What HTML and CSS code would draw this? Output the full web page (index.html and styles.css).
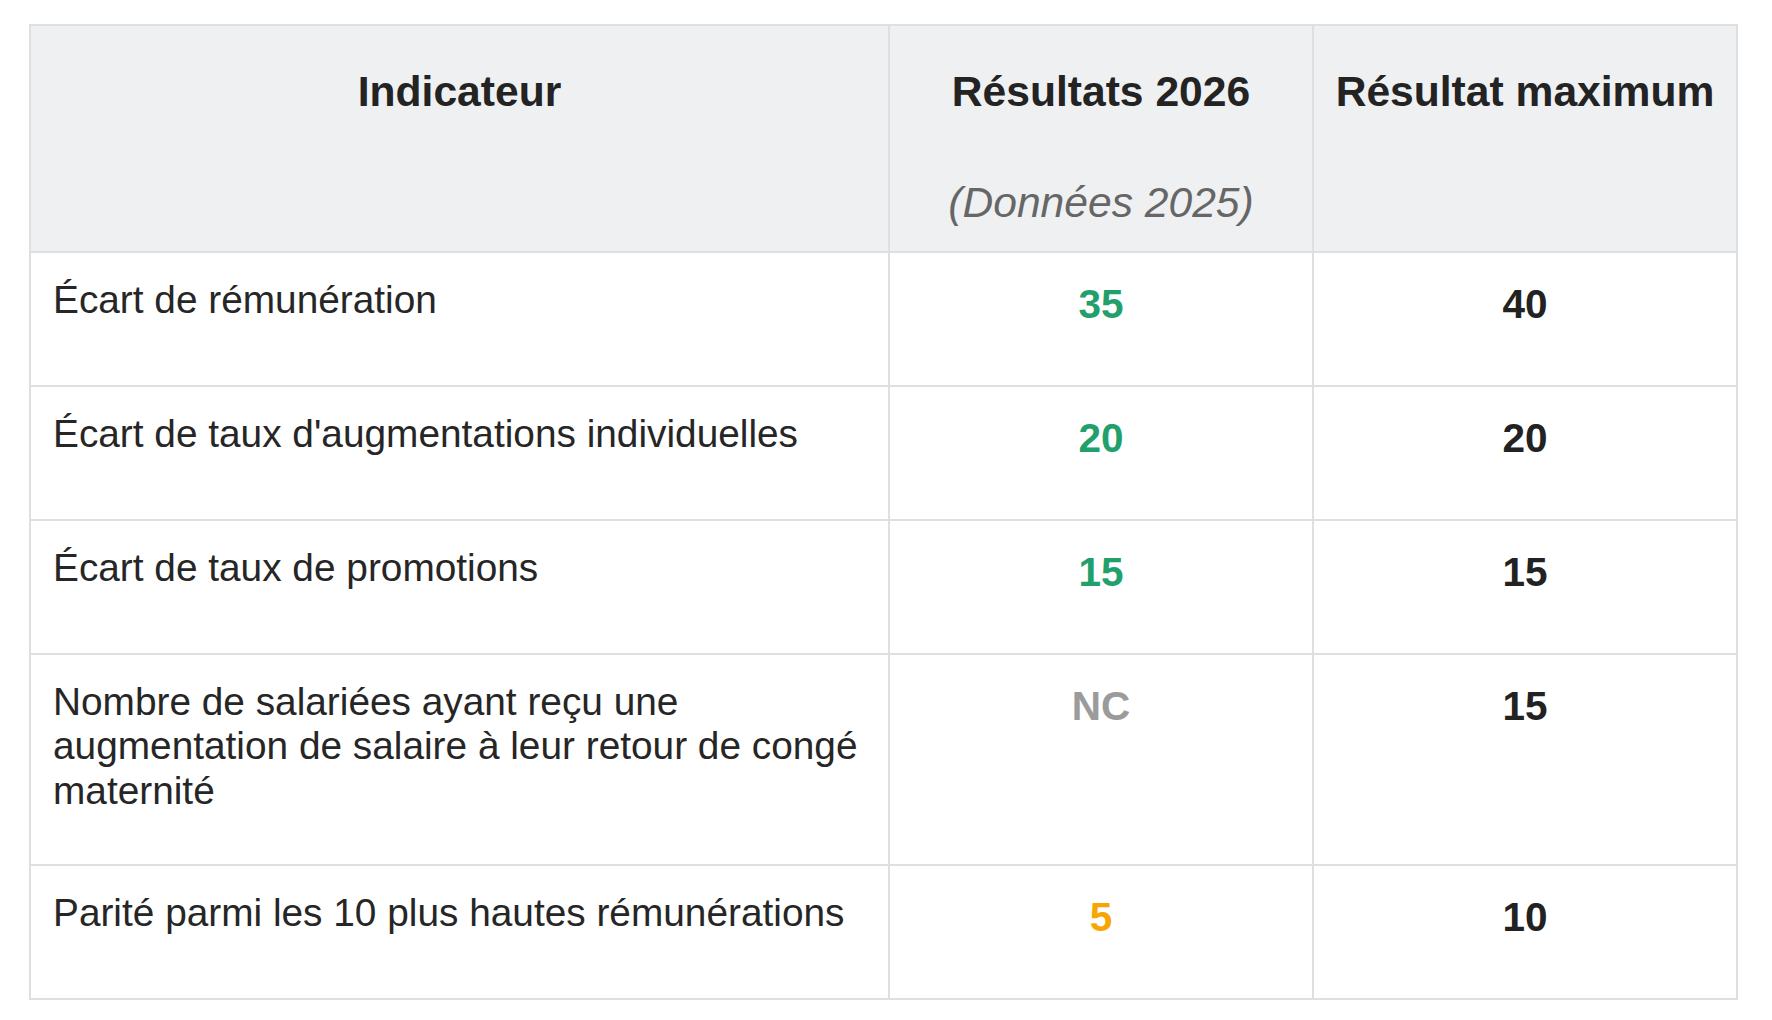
FILE: index.html
```html
<!DOCTYPE html>
<html lang="fr">
<head>
<meta charset="utf-8">
<title>Index égalité</title>
<link rel="stylesheet" href="styles.css">
</head>
<body>
<div class="page">
  <table class="scores">
    <colgroup>
      <col class="col-ind">
      <col class="col-res">
      <col class="col-max">
    </colgroup>
    <thead>
      <tr>
        <th>Indicateur</th>
        <th>Résultats 2026<br><br><em class="sub">(Données 2025)</em></th>
        <th>Résultat maximum</th>
      </tr>
    </thead>
    <tbody>
      <tr>
        <td class="label">Écart de rémunération</td>
        <td class="num good">35</td>
        <td class="num">40</td>
      </tr>
      <tr>
        <td class="label">Écart de taux d'augmentations individuelles</td>
        <td class="num good">20</td>
        <td class="num">20</td>
      </tr>
      <tr>
        <td class="label">Écart de taux de promotions</td>
        <td class="num good">15</td>
        <td class="num">15</td>
      </tr>
      <tr>
        <td class="label">Nombre de salariées ayant reçu une augmentation de salaire à leur retour de congé maternité</td>
        <td class="num na">NC</td>
        <td class="num">15</td>
      </tr>
      <tr>
        <td class="label">Parité parmi les 10 plus hautes rémunérations</td>
        <td class="num warn">5</td>
        <td class="num">10</td>
      </tr>
    </tbody>
  </table>
</div>
</body>
</html>
```

FILE: styles.css
```css
html, body {
  margin: 0;
  padding: 0;
  background: #ffffff;
}

body {
  font-family: "Liberation Sans", Arial, Helvetica, sans-serif;
  color: #262626;
}

.page {
  padding: 24px 0 0 29px;
}

.scores {
  width: 1707px;
  table-layout: fixed;
  border-collapse: collapse;
  border: 2px solid #dedfe0;
}

.col-ind { width: 859px; }
.col-res { width: 424px; }
.col-max { width: 424px; }

.scores th,
.scores td {
  border: 2px solid #dedfe0;
  vertical-align: top;
}

.scores th {
  background: #eff0f2;
  font-size: 42.6px;
  font-weight: bold;
  line-height: 55.5px;
  text-align: center;
  color: #232323;
  padding: 38px 18px 20px;
}

.sub {
  font-weight: normal;
  font-style: italic;
  color: #666666;
}

.scores td {
  padding: 25px 22px 51px;
}

.label {
  font-size: 38.8px;
  line-height: 44.5px;
  color: #262626;
}

.scores td.num {
  font-size: 40.5px;
  font-weight: bold;
  line-height: 52px;
  text-align: center;
  color: #222222;
  padding-bottom: 55px;
}

.scores td.good { color: #21a06c; }
.scores td.warn { color: #f7a500; }
.scores td.na { color: #9b9b9b; }
```
